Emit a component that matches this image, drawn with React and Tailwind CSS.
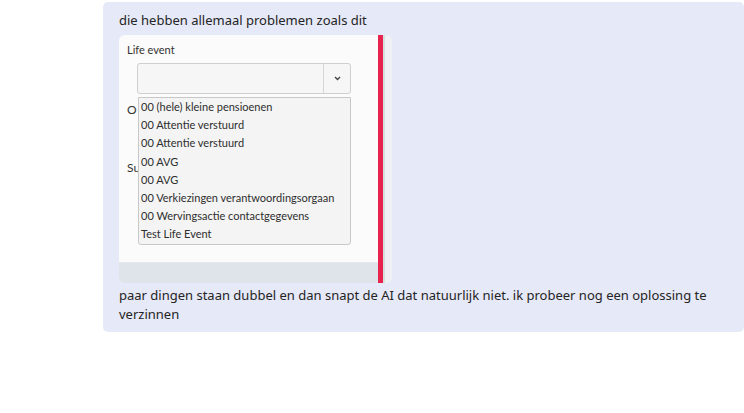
const items = [
  "00 (hele) kleine pensioenen",
  "00 Attentie verstuurd",
  "00 Attentie verstuurd",
  "00 AVG",
  "00 AVG",
  "00 Verkiezingen verantwoordingsorgaan",
  "00 Wervingsactie contactgegevens",
  "Test Life Event",
];

function Screenshot() {
  return (
    <div className="mt-[5px] flex h-[248px] w-[273px] overflow-hidden rounded-[6px] bg-[#eef0f4]">
      <div className="flex w-[259px] flex-col">
        <div className="relative h-[227px] bg-[#fbfbfb] font-['Lato',sans-serif] text-[11px] text-[#333]">
          <div className="pl-2 pt-[8px] leading-[13px]">Life event</div>
          <div className="ml-[18px] mt-[7px] flex h-[31px] w-[214px] rounded-[3px] border border-[#cfcfcf] bg-[#f6f6f6]">
            <div className="flex-1" />
            <div className="flex w-[27px] items-center justify-center border-l border-[#d6d6d6]">
              <svg width="7" height="5" viewBox="0 0 7 5">
                <path d="M1 1l2.5 2.5L6 1" fill="none" stroke="#444" strokeWidth="1.4" />
              </svg>
            </div>
          </div>
          <div className="pl-2 pt-[9px] text-[12px] leading-[14px]">O</div>
          <div className="pl-2 pt-[44px] text-[12px] leading-[14px]">Su</div>
          <div className="absolute left-[19px] top-[62px] w-[213px] rounded-b-[3px] border border-[#c8c8c8] bg-[#f4f4f4]">
            {items.map((it, i) => (
              <div key={i} className="h-[18.2px] pl-[2px] leading-[18px] text-[#2e2e2e]">
                {it}
              </div>
            ))}
          </div>
        </div>
        <div className="flex-1 border-t border-[#e4e9ee] bg-[#dfe4eb]" />
      </div>
      <div className="w-[5px] bg-[#e8234e]" />
      <div className="w-[2px] bg-[#d4e2de]" />
      <div className="flex-1 bg-[#eff1f4]" />
    </div>
  );
}

export default function App() {
  return (
    <div className="h-[413px] w-[744px] bg-white pl-[103px] pt-[2px]">
      <div className="rounded-[5px] bg-[#e6e9f8] pb-[8px] pl-4 pr-6 pt-[9px] font-['Noto_Sans',sans-serif] text-[13px] leading-[19px] text-[#242424]">
        <p>die hebben allemaal problemen zoals dit</p>
        <Screenshot />
        <p className="mt-[3px]">
          paar dingen staan dubbel en dan snapt de AI dat natuurlijk niet. ik probeer nog een oplossing te verzinnen
        </p>
      </div>
    </div>
  );
}
